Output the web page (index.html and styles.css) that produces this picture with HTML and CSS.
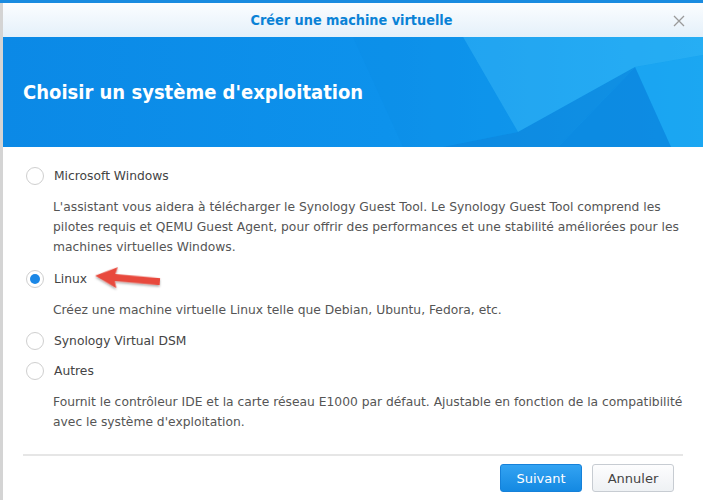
FILE: index.html
```html
<!DOCTYPE html>
<html lang="fr">
<head>
    <meta charset="UTF-8">
    <title>Créer une machine virtuelle</title>
    <link rel="stylesheet" href="styles.css">
</head>
<body>
    <div class="backdrop"></div>
    <div class="window">
        <div class="titlebar">
            <span class="title">Créer une machine virtuelle</span>
            <svg class="close" width="12" height="12" viewBox="0 0 12 12">
                <path d="M1 1 L11 11 M11 1 L1 11" stroke="#9a9a9a" stroke-width="1.3" fill="none"/>
            </svg>
        </div>
        <div class="banner">
            <svg class="banner-art" width="700" height="110" viewBox="0 0 700 110" preserveAspectRatio="none">
                <defs>
                    <linearGradient id="bg" x1="0" y1="0" x2="1" y2="0">
                        <stop offset="0" stop-color="#0b89e6"/>
                        <stop offset="0.55" stop-color="#0d92ec"/>
                        <stop offset="1" stop-color="#16a6f3"/>
                    </linearGradient>
                </defs>
                <rect width="700" height="110" fill="url(#bg)"/>
                <polygon points="460,0 700,0 700,18 632,30 515,95" fill="#45bdf7" opacity="0.35"/>
                <polygon points="440,110 515,95 632,30 555,110" fill="#0a7ad2" opacity="0.45"/>
                <polygon points="632,30 700,18 700,110 668,110" fill="#20a8f2" opacity="0.5"/>
                <polygon points="555,110 632,30 668,110" fill="#0b86de" opacity="0.8"/>
                <polygon points="350,0 460,0 515,95 440,110 400,110" fill="#0c8be6" opacity="0.35"/>
            </svg>
            <h1>Choisir un système d'exploitation</h1>
        </div>
        <div class="content">
            <label class="option">
                <span class="radio"></span>
                <span class="option-label">Microsoft Windows</span>
            </label>
            <p class="desc desc-first">L'assistant vous aidera à télécharger le Synology Guest Tool. Le Synology Guest Tool comprend les pilotes requis et QEMU Guest Agent, pour offrir des performances et une stabilité améliorées pour les machines virtuelles Windows.</p>

            <label class="option">
                <span class="radio checked"></span>
                <span class="option-label">Linux</span>
                <svg class="arrow" width="74" height="30" viewBox="0 0 74 30">
                    <defs>
                        <filter id="sh" x="-20%" y="-40%" width="140%" height="180%">
                            <feDropShadow dx="0" dy="1.5" stdDeviation="1.2" flood-color="#000" flood-opacity="0.35"/>
                        </filter>
                    </defs>
                    <g filter="url(#sh)" transform="rotate(4 37 15)">
                        <polygon points="3,14 25,4 23,11 68,12 68,19 23,18 25,25" fill="#e8493c"/>
                    </g>
                </svg>
            </label>
            <p class="desc">Créez une machine virtuelle Linux telle que Debian, Ubuntu, Fedora, etc.</p>

            <label class="option">
                <span class="radio"></span>
                <span class="option-label">Synology Virtual DSM</span>
            </label>

            <label class="option">
                <span class="radio"></span>
                <span class="option-label">Autres</span>
            </label>
            <p class="desc">Fournit le contrôleur IDE et la carte réseau E1000 par défaut. Ajustable en fonction de la compatibilité avec le système d'exploitation.</p>
        </div>
        <div class="footer">
            <button class="btn btn-primary">Suivant</button>
            <button class="btn">Annuler</button>
        </div>
    </div>
</body>
</html>
```

FILE: styles.css
```css
body {
    margin: 0;
    padding: 0;
    width: 703px;
    height: 500px;
    overflow: hidden;
    background-color: #d4d4d4;
    font-family: 'DejaVu Sans', Verdana, sans-serif;
}
.backdrop {
    height: 3px;
    background-color: #1a8be0;
}
.window {
    margin-left: 3px;
    height: 497px;
    background-color: #fff;
    display: flex;
    flex-direction: column;
}
.titlebar {
    height: 34px;
    display: flex;
    align-items: center;
    justify-content: center;
    position: relative;
    background: linear-gradient(#fbfdff, #e4f0fa);
}
.title {
    font-family: 'DejaVu Sans Condensed', 'DejaVu Sans', sans-serif;
    font-stretch: condensed;
    font-weight: bold;
    font-size: 14.3px;
    color: #0a82d6;
    margin-left: -3px;
}
.close {
    position: absolute;
    right: 18px;
    top: 12px;
}
.banner {
    height: 110px;
    position: relative;
    display: flex;
    align-items: center;
    padding-left: 20px;
    overflow: hidden;
}
.banner-art {
    position: absolute;
    left: 0;
    top: 0;
}
.banner h1 {
    position: relative;
    margin: 0;
    color: #fff;
    font-family: 'DejaVu Sans Condensed', 'DejaVu Sans', sans-serif;
    font-stretch: condensed;
    font-weight: bold;
    font-size: 20px;
}
.content {
    flex-grow: 1;
    padding: 14px 20px 0 20px;
    display: flex;
    flex-direction: column;
}
.option {
    height: 30px;
    display: flex;
    align-items: center;
    gap: 10px;
    padding-left: 3px;
    position: relative;
    font-size: 12.3px;
    color: #444;
}
.radio {
    width: 16px;
    height: 16px;
    border: 1px solid #cfcfcf;
    border-radius: 50%;
    background-color: #fff;
    display: flex;
    align-items: center;
    justify-content: center;
}
.radio.checked::after {
    content: "";
    width: 10px;
    height: 10px;
    border-radius: 50%;
    background-color: #1b87e6;
}
.arrow {
    position: absolute;
    left: 69px;
    top: 0;
}
.desc {
    margin: 6px -12px 6px 30px;
    font-size: 12.3px;
    line-height: 20px;
    color: #555;
}
.desc-first {
    margin-bottom: 7px;
}
.footer {
    margin: 0 20px;
    border-top: 2px solid #e6e6e6;
    height: 44px;
    display: flex;
    align-items: center;
    justify-content: flex-end;
    gap: 10px;
    padding-right: 9px;
}
.btn {
    width: 82px;
    height: 28px;
    font-family: 'DejaVu Sans', Verdana, sans-serif;
    font-size: 13px;
    color: #444;
    border: 1px solid #c7ccd2;
    border-radius: 3px;
    background: linear-gradient(#fdfdfe, #eef1f4);
}
.btn-primary {
    color: #fff;
    border-color: #1681d9;
    background: linear-gradient(#33a3f2, #1489e2);
}
```
